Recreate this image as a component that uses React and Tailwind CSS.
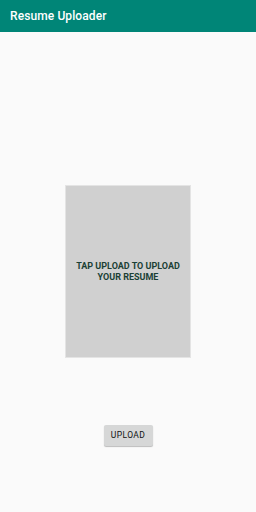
export default function App() {
  return (
    <div className="w-[256px] h-[512px] bg-[#fafafa] flex flex-col" style={{ fontFamily: "Roboto, 'Noto Sans', sans-serif" }}>
      <div className="h-[32px] bg-[#008577] flex items-center px-[10px] shrink-0">
        <span className="text-white text-[12px] font-medium tracking-[0.1px]">Resume Uploader</span>
      </div>
      <div className="flex flex-col items-center pt-[153px]">
        <div className="w-[126px] h-[173px] bg-[#d0d0d0] border border-[#e4e4e4] flex items-center justify-center">
          <span className="text-[9px] font-bold leading-[11px] text-center text-[#1a3f35] px-1">TAP UPLOAD TO UPLOAD<br />YOUR RESUME</span>
        </div>
        <button className="mt-[67px] w-[49px] h-[21px] bg-[#d6d7d7] rounded-[2px] shadow-[0_1px_1px_rgba(0,0,0,0.25)] text-[8.5px] font-normal text-[#111] tracking-[0.4px] flex items-center justify-center">UPLOAD</button>
      </div>
    </div>
  );
}
